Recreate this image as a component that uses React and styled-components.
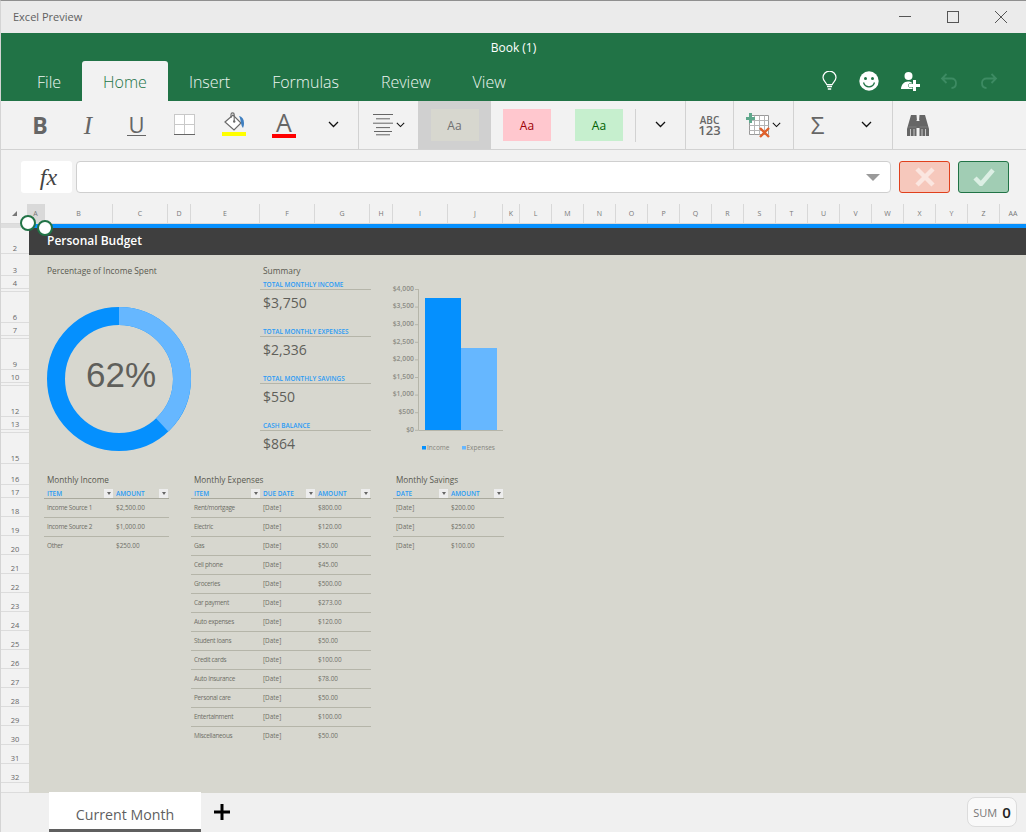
import styled, { createGlobalStyle } from 'styled-components';
import { Fragment } from 'react';

const UI = "'Open Sans', 'Noto Sans', sans-serif";

const GlobalStyle = createGlobalStyle`
  html, body { margin: 0; padding: 0; background: #f2f2f2; }
  * { box-sizing: border-box; }
  body { font-family: ${UI}; }
`;

const COLUMNS = [
  ['A', 17], ['B', 68], ['C', 55], ['D', 23], ['E', 69], ['F', 55], ['G', 55], ['H', 23], ['I', 55], ['J', 55], ['K', 17],
  ['L', 32], ['M', 32], ['N', 32], ['O', 32], ['P', 32], ['Q', 32], ['R', 32], ['S', 32], ['T', 32], ['U', 32], ['V', 32],
  ['W', 32], ['X', 32], ['Y', 32], ['Z', 32], ['AA', 27],
];

const ROWS = [
  ['2', 26], ['3', 22], ['4', 13], ['', 3], ['6', 31], ['7', 13], ['', 3], ['9', 31], ['10', 13], ['', 3], ['12', 31],
  ['13', 13], ['', 3], ['15', 31], ['16', 21], ['17', 13],
  ...Array.from({ length: 15 }, (_, i) => [String(18 + i), 19]),
  ['', 10],
];

const SUMMARY = [
  ['TOTAL MONTHLY INCOME', '$3,750'],
  ['TOTAL MONTHLY EXPENSES', '$2,336'],
  ['TOTAL MONTHLY SAVINGS', '$550'],
  ['CASH BALANCE', '$864'],
];

const INCOME = [
  ['Income Source 1', '$2,500.00'],
  ['Income Source 2', '$1,000.00'],
  ['Other', '$250.00'],
];

const EXPENSES = [
  ['Rent/mortgage', '[Date]', '$800.00'],
  ['Electric', '[Date]', '$120.00'],
  ['Gas', '[Date]', '$50.00'],
  ['Cell phone', '[Date]', '$45.00'],
  ['Groceries', '[Date]', '$500.00'],
  ['Car payment', '[Date]', '$273.00'],
  ['Auto expenses', '[Date]', '$120.00'],
  ['Student loans', '[Date]', '$50.00'],
  ['Credit cards', '[Date]', '$100.00'],
  ['Auto Insurance', '[Date]', '$78.00'],
  ['Personal care', '[Date]', '$50.00'],
  ['Entertainment', '[Date]', '$100.00'],
  ['Miscellaneous', '[Date]', '$50.00'],
];

const SAVINGS = [
  ['[Date]', '$200.00'],
  ['[Date]', '$250.00'],
  ['[Date]', '$100.00'],
];

const AXIS = ['$4,000', '$3,500', '$3,000', '$2,500', '$2,000', '$1,500', '$1,000', '$500', '$0'];

const Window = styled.div`
  position: relative;
  width: 1026px;
  height: 832px;
  overflow: hidden;
  display: flex;
  flex-direction: column;
  border-top: 1px solid #8f8f8f;
  border-left: 1px solid #d4d4d4;
  background: #f2f2f2;
`;

const TitleBar = styled.div`
  height: 32px;
  flex: none;
  background: #ebebeb;
  display: flex;
  align-items: center;
  padding: 0 1px 0 12px;
`;

const AppName = styled.span`
  font-size: 11px;
  color: #606060;
  flex: 1;
  padding-bottom: 1px;
`;

const WinButton = styled.button`
  width: 48px;
  height: 32px;
  border: 0;
  padding: 0;
  background: none;
  display: flex;
  align-items: center;
  justify-content: center;
`;

const Header = styled.div`
  height: 68px;
  flex: none;
  background: #217346;
  display: flex;
  flex-direction: column;
`;

const BookName = styled.div`
  height: 28px;
  display: flex;
  align-items: center;
  justify-content: center;
  font-size: 12px;
  color: #fff;
  padding-top: 1px;
`;

const TabRow = styled.div`
  flex: 1;
  display: flex;
  padding-left: 15px;
`;

const Tab = styled.div`
  padding: 2px 21px 0;
  display: flex;
  align-items: center;
  font-size: 16px;
  font-weight: 300;
  border-radius: 3px 3px 0 0;
  color: ${({ $active }) => ($active ? '#217346' : '#eef6f1')};
  background: ${({ $active }) => ($active ? '#f2f2f2' : 'transparent')};
`;

const HeaderTools = styled.div`
  margin-left: auto;
  display: flex;
  align-items: center;
  padding-right: 28px;
  gap: 22px;
`;

const HistoryTools = styled.div`
  display: flex;
  gap: 22px;
  margin-left: -2px;
`;

const Ribbon = styled.div`
  height: 49px;
  flex: none;
  display: flex;
  border-bottom: 1px solid #d2d2d2;
`;

const RibbonGroup = styled.div`
  display: flex;
  height: 100%;
  padding-left: ${({ $pad }) => $pad || 0}px;
  border-right: ${({ $plain }) => ($plain ? '0' : '1px solid #d2d2d2')};
`;

const ToolButton = styled.div`
  width: ${({ $w }) => $w}px;
  height: 100%;
  display: flex;
  flex-direction: column;
  align-items: center;
  justify-content: center;
  color: #666;
  padding-bottom: ${({ $lift }) => $lift || 0}px;
`;

const BoldMark = styled.span`
  font-size: 23px;
  font-weight: 700;
  line-height: 1;
`;

const ItalicMark = styled.span`
  font-family: 'Liberation Serif', serif;
  font-style: italic;
  font-size: 25px;
  line-height: 1;
`;

const UnderMark = styled.span`
  font-size: 22px;
  line-height: 21px;
  padding: 0 1px;
  border-bottom: 1px solid #666;
`;

const ColorMark = styled.span`
  font-size: 25px;
  line-height: 22px;
  height: 23px;
`;

const ColorBar = styled.span`
  width: 24px;
  height: 4px;
  background: ${({ $color }) => $color};
`;

const InlineTools = styled.div`
  width: ${({ $w }) => $w}px;
  height: 100%;
  display: flex;
  align-items: center;
  padding-left: ${({ $pad }) => $pad}px;
  gap: ${({ $gap }) => $gap}px;
`;

const StyleCell = styled.div`
  width: ${({ $w }) => $w}px;
  height: 100%;
  display: flex;
  align-items: center;
  justify-content: center;
  background: ${({ $selected }) => ($selected ? '#d0d0d0' : 'transparent')};
`;

const Swatch = styled.div`
  width: 48px;
  height: 32px;
  display: flex;
  align-items: center;
  justify-content: center;
  font-size: 12px;
  background: ${({ $bg }) => $bg};
  color: ${({ $fg }) => $fg};
`;

const InnerDivider = styled.div`
  width: 1px;
  height: 33px;
  margin-top: 8px;
  background: #d2d2d2;
`;

const NumberMark = styled.div`
  font-size: 10px;
  font-weight: 600;
  line-height: 10px;
  text-align: center;
  color: #666;
  & > b { display: block; font-size: 13px; line-height: 11px; font-weight: 600; }
`;

const SigmaMark = styled.span`
  font-size: 24px;
  color: #666;
  line-height: 1;
`;

const FormulaBar = styled.div`
  height: 54px;
  flex: none;
  display: flex;
  align-items: center;
  padding: 0 16px 0 20px;
`;

const FxBox = styled.div`
  width: 51px;
  height: 32px;
  background: #fff;
  border-radius: 3px;
  display: flex;
  align-items: center;
  justify-content: center;
  padding-left: 4px;
  font-family: 'Liberation Serif', serif;
  font-style: italic;
  font-size: 24px;
  color: #444;
`;

const FormulaInput = styled.div`
  width: 815px;
  height: 32px;
  margin-left: 4px;
  background: #fff;
  border: 1px solid #cfcfcf;
  border-radius: 4px;
  display: flex;
  align-items: center;
  justify-content: flex-end;
  padding-right: 10px;
`;

const Caret = styled.span`
  width: 0;
  height: 0;
  border-left: 7px solid transparent;
  border-right: 7px solid transparent;
  border-top: 7px solid #9a9a9a;
`;

const FormulaButton = styled.div`
  width: 51px;
  height: 32px;
  border-radius: 3px;
  display: flex;
  align-items: center;
  justify-content: center;
  margin-left: ${({ $ml }) => $ml}px;
  background: ${({ $bg }) => $bg};
  border: 1px solid ${({ $line }) => $line};
`;

const ColumnBar = styled.div`
  height: 19px;
  flex: none;
  display: flex;
`;

const Corner = styled.div`
  width: 27px;
  display: flex;
  justify-content: flex-end;
  padding: 7px 10px 0 0;
`;

const CornerMark = styled.span`
  width: 0;
  height: 0;
  border-left: 5px solid transparent;
  border-bottom: 5px solid #777;
`;

const ColumnHead = styled.div`
  width: ${({ $w }) => $w}px;
  flex: none;
  display: flex;
  align-items: center;
  justify-content: center;
  font-size: 7px;
  color: #777;
  border-left: ${({ $selected }) => ($selected ? '0' : '1px solid #d8d8d8')};
  background: ${({ $selected }) => ($selected ? '#d9d9d9' : 'transparent')};
`;

const GridArea = styled.div`
  flex: 1;
  min-height: 0;
  display: flex;
  border-top: 1px solid #dadada;
`;

const RowBar = styled.div`
  width: 28px;
  flex: none;
  overflow: hidden;
  display: flex;
  flex-direction: column;
`;

const TopRowHead = styled.div`
  height: 4px;
  flex: none;
  background: #dedede;
`;

const RowHead = styled.div`
  height: ${({ $h }) => $h}px;
  flex: none;
  display: flex;
  align-items: flex-end;
  justify-content: center;
  font-size: 7.5px;
  line-height: 9px;
  color: #666;
  border-bottom: 1px solid #dcdcdc;
`;

const Sheet = styled.div`
  flex: 1;
  min-width: 0;
  background: #d7d7cf;
  border-top: 4px solid #0590fe;
  display: flex;
  flex-direction: column;
`;

const Banner = styled.div`
  height: 27px;
  flex: none;
  background: #3f3f3f;
  color: #fff;
  font-size: 12px;
  font-weight: 600;
  display: flex;
  align-items: center;
  padding: 0 0 3px 18px;
`;

const TopSection = styled.div`
  height: 210px;
  flex: none;
  display: flex;
`;

const DonutPanel = styled.div`
  width: 231px;
  flex: none;
  padding-left: 18px;
`;

const BlockTitle = styled.div`
  height: 21px;
  padding-top: 9px;
  font-size: 8.4px;
  line-height: 14px;
  color: #59594f;
  padding-left: ${({ $pad }) => $pad || 0}px;
`;

const DonutChart = styled.svg`
  display: block;
  margin-top: 31px;
`;

const SummaryPanel = styled.div`
  width: 111px;
  flex: none;
`;

const SummaryLabel = styled.div`
  height: 14px;
  padding-left: 3px;
  font-size: 6.4px;
  font-weight: 600;
  line-height: 17px;
  color: #2a9bf5;
  border-bottom: 1px solid #b5b5a9;
  white-space: nowrap;
`;

const SummaryValue = styled.div`
  height: 33px;
  padding-left: 3px;
  font-size: 14px;
  line-height: 25px;
  color: #5f5f5a;
`;

const BarChart = styled.svg`
  display: block;
  flex: none;
`;

const TableSection = styled.div`
  display: flex;
  gap: 22px;
  padding-left: 15px;
`;

const DataTable = styled.div`
  width: ${({ $w }) => $w}px;
  flex: none;
`;

const TableTitle = styled.div`
  height: 21px;
  display: flex;
  align-items: flex-end;
  padding-left: 3px;
  font-size: 8.2px;
  line-height: 12px;
  color: #59594f;
`;

const HeadRow = styled.div`
  height: 13px;
  display: grid;
  grid-template-columns: ${({ $cols }) => $cols};
  border-bottom: 1px solid #a9a99d;
`;

const HeadCell = styled.div`
  display: flex;
  align-items: center;
  justify-content: space-between;
  padding: 3px 0 0 3px;
  font-size: 6.4px;
  font-weight: 600;
  color: #2a9bf5;
  white-space: nowrap;
`;

const FilterButton = styled.span`
  width: 9px;
  height: 9px;
  margin-top: -1px;
  background: #ededed;
  display: flex;
  align-items: center;
  justify-content: center;
  &::after {
    content: '';
    border-left: 2.5px solid transparent;
    border-right: 2.5px solid transparent;
    border-top: 3px solid #666;
  }
`;

const DataRow = styled.div`
  height: 19px;
  display: grid;
  grid-template-columns: ${({ $cols }) => $cols};
  align-items: center;
  padding-bottom: 1px;
  border-bottom: 1px solid ${({ $last }) => ($last ? 'transparent' : '#b5b5a9')};
`;

const DataCell = styled.div`
  padding-left: 3px;
  font-size: 6.4px;
  color: #6e6e66;
  white-space: nowrap;
  letter-spacing: ${({ $tight }) => ($tight ? '-0.3px' : '0')};
`;

const TabBar = styled.div`
  height: 39px;
  flex: none;
  background: #f0f0f0;
  display: flex;
  align-items: flex-start;
  padding-left: 48px;
`;

const SheetTab = styled.div`
  width: 152px;
  height: 41px;
  margin-top: -1px;
  background: #fff;
  border-bottom: 4px solid #5f5f5f;
  display: flex;
  align-items: center;
  justify-content: center;
  font-size: 14.2px;
  font-weight: 500;
  color: #5f5f5f;
  padding-top: 7px;
`;

const AddTab = styled.div`
  width: 42px;
  height: 39px;
  display: flex;
  align-items: center;
  justify-content: center;
  padding-bottom: 2px;
`;

const SumBox = styled.div`
  width: 50px;
  height: 30px;
  margin: 4px 9px 0 auto;
  background: #f9f9f9;
  border: 1px solid #dcdcdc;
  border-radius: 8px;
  display: flex;
  align-items: center;
  justify-content: center;
  gap: 5px;
  font-size: 11px;
  color: #777;
  & > b { font-size: 15px; font-weight: 600; color: #222; }
`;

const Handle = styled.span`
  position: absolute;
  left: ${({ $x }) => $x}px;
  top: ${({ $y }) => $y}px;
  width: 16px;
  height: 16px;
  background: #fff;
  border: 2px solid #217346;
  border-radius: 50%;
`;

const Chevron = ({ size = 11 }) => (
  <svg width={size} height={size * 0.64} viewBox="0 0 11 7">
    <path d="M1 1l4.5 4.5L10 1" fill="none" stroke="#111" strokeWidth="1.3" />
  </svg>
);

const BordersIcon = () => (
  <svg width="22" height="22" viewBox="0 0 22 22">
    <rect x="0.5" y="0.5" width="20" height="20" fill="#fff" stroke="#c9c9c9" />
    <path d="M10.5 1v19M1 10.5h19" stroke="#c9c9c9" />
    <path d="M0 20.5h21" stroke="#666" />
  </svg>
);

const FillIcon = () => (
  <svg width="24" height="20" viewBox="0 0 24 20">
    <path d="M3 10l8-7 8 8-7 7z" fill="#fff" stroke="#6a6a6a" strokeWidth="1.2" />
    <path d="M9 6V2.5a1.6 1.6 0 0 1 3.2 0V9" fill="none" stroke="#6a6a6a" strokeWidth="1.1" />
    <circle cx="12.2" cy="9.5" r="1.2" fill="#6a6a6a" />
    <path d="M17 4c3 .6 5 3 5 7 0 2-.3 3.5-1 5-1-1-1.6-3-2-5-.3-2.4-1-5-2-7z" fill="#3f7fc0" />
  </svg>
);

const AlignIcon = () => (
  <svg width="20" height="22" viewBox="0 0 20 22">
    <path d="M0 .5h20M3 4.8h14M0 9.2h20M3 13.6h14M1 17.5h18M3 20.8h14" stroke="#666" strokeWidth="1" />
  </svg>
);

const TableIcon = () => (
  <svg width="25" height="25" viewBox="0 0 25 25">
    <path d="M3.5 2.5h19v19h-19z" fill="#fff" stroke="#9a9a9a" />
    <path d="M3.5 7.5h19M3.5 12.5h19M3.5 17.5h19M8.5 2.5v19M13.5 2.5v19M18.5 2.5v19" stroke="#b5b5b5" />
    <path d="M0 4h9v3H6v3H3V7H0z M3 0h3v4H3z" fill="#5fa88c" />
    <path d="M14 15l9 9M23 15l-9 9" stroke="#e0602a" strokeWidth="2.4" />
  </svg>
);

const BinocularsIcon = () => (
  <svg width="22" height="21" viewBox="0 0 22 21">
    <path d="M4 0h5.500l.5 6h2l.5-6H18l2 7 2 7v7h-9.500v-8h-3v8H0v-7l2-7z" fill="#666" />
    <path d="M3.500 14v7M7 14v7M15 14v7M18.500 14v7" stroke="#f2f2f2" strokeWidth="0.7" />
    <path d="M9.500 5.500h3" stroke="#f2f2f2" strokeWidth="0.8" />
    <path d="M1.500 12h8M12.500 12h8" stroke="#8a8a8a" strokeWidth="0.7" />
  </svg>
);

const BulbIcon = () => (
  <svg width="15" height="20" viewBox="0 0 15 20">
    <path d="M4.8 13.6C4 11 1 9.800 1 6.600a6.500 6.500 0 0 1 13 0c0 3.200-3 4.400-3.800 7z" fill="none" stroke="#fff" strokeWidth="1.200" />
    <path d="M5 15.500h5M5.800 18h3.400" stroke="#fff" strokeWidth="1.600" />
  </svg>
);

const SmileIcon = () => (
  <svg width="20" height="20" viewBox="0 0 20 20">
    <circle cx="10" cy="10" r="9.700" fill="#fff" />
    <circle cx="6.500" cy="7.500" r="1.500" fill="#217346" />
    <circle cx="13.500" cy="7.500" r="1.500" fill="#217346" />
    <path d="M4.500 11.500c1 3 3 4.300 5.500 4.300s4.500-1.300 5.500-4.300" fill="none" stroke="#217346" strokeWidth="1.300" />
  </svg>
);

const AddUserIcon = () => (
  <svg width="19" height="19" viewBox="0 0 19 19">
    <circle cx="7.500" cy="4" r="4" fill="#fff" />
    <path d="M0 17c0-4 3-7.500 7-7.500s6 2.500 6 7.500z" fill="#fff" />
    <path d="M12 8h3v4h4v3h-4v4h-3v-4H8v-3h4z" fill="#fff" stroke="#217346" strokeWidth="1" paintOrder="stroke" />
  </svg>
);

const ArrowIcon = ({ flip }) => (
  <svg width="18" height="16" viewBox="0 0 17 16" style={flip ? { transform: 'scaleX(-1)' } : undefined}>
    <path d="M6 1L1.500 5.500 6 10M2 5.500h9c2.500 0 4.500 1.800 4.500 4.500S14 15 11 15" fill="none" stroke="#3d8b63" strokeWidth="1.800" />
  </svg>
);

const WindowIcon = ({ children }) => (
  <svg width="14" height="14" viewBox="0 0 14 14" fill="none" stroke="#555" strokeWidth="1">{children}</svg>
);

const Donut = () => (
  <DonutChart width="144" height="144" viewBox="0 0 144 144">
    <circle cx="72" cy="72" r="63" fill="none" stroke="#0590fe" strokeWidth="18" />
    <circle
      cx="72" cy="72" r="63" fill="none" stroke="#66b7ff" strokeWidth="18"
      pathLength="100" strokeDasharray="38 62" transform="rotate(-90 72 72)"
    />
    <text x="74" y="80" textAnchor="middle" fontFamily="'Liberation Sans', sans-serif" fontSize="35" fill="#5f5f5b">62%</text>
  </DonutChart>
);

const Bars = () => (
  <BarChart width="140" height="210" viewBox="371 255 140 210">
    {AXIS.map((label, i) => (
      <Fragment key={label}>
        <text x="414" y={290.8 + i * 17.6} textAnchor="end" fontFamily={UI} fontSize="6.800" fontWeight="600" fill="#8d8d86">{label}</text>
        <path d={`M415 ${289.5 + i * 17.6}h3`} stroke="#b5b5a9" />
      </Fragment>
    ))}
    <path d="M418.500 289v141.500H503" fill="none" stroke="#b5b5a9" />
    <rect x="425" y="298" width="36" height="132" fill="#0590fe" />
    <rect x="461" y="348" width="36" height="82" fill="#66b7ff" />
    <rect x="422" y="446" width="4" height="3.500" fill="#0590fe" />
    <text x="427" y="449.800" fontFamily={UI} fontSize="6.500" fill="#85857e">Income</text>
    <rect x="462" y="446" width="4" height="3.500" fill="#66b7ff" />
    <text x="466.500" y="449.800" fontFamily={UI} fontSize="6.500" fill="#85857e">Expenses</text>
  </BarChart>
);

const BudgetTable = ({ title, width, cols, head, rows, tight }) => (
  <DataTable $w={width}>
    <TableTitle>{title}</TableTitle>
    <HeadRow $cols={cols}>
      {head.map((label) => (
        <HeadCell key={label}>
          {label}
          <FilterButton />
        </HeadCell>
      ))}
    </HeadRow>
    {rows.map((row, i) => (
      <DataRow key={row[0] + i} $cols={cols} $last={i === rows.length - 1}>
        {row.map((cell, j) => (
          <DataCell key={j} $tight={tight && j === 0}>{cell}</DataCell>
        ))}
      </DataRow>
    ))}
  </DataTable>
);

export default function App() {
  return (
    <Window>
      <GlobalStyle />
      <TitleBar>
        <AppName>Excel Preview</AppName>
        <WinButton>
          <WindowIcon><path d="M1 6.500h12" /></WindowIcon>
        </WinButton>
        <WinButton>
          <WindowIcon><rect x="1.500" y="1.500" width="11" height="11" /></WindowIcon>
        </WinButton>
        <WinButton>
          <WindowIcon><path d="M1 1l12 12M13 1L1 13" /></WindowIcon>
        </WinButton>
      </TitleBar>

      <Header>
        <BookName>Book (1)</BookName>
        <TabRow>
          <Tab>File</Tab>
          <Tab $active>Home</Tab>
          <Tab>Insert</Tab>
          <Tab>Formulas</Tab>
          <Tab>Review</Tab>
          <Tab>View</Tab>
          <HeaderTools>
            <BulbIcon />
            <SmileIcon />
            <AddUserIcon />
            <HistoryTools>
              <ArrowIcon />
              <ArrowIcon flip />
            </HistoryTools>
          </HeaderTools>
        </TabRow>
      </Header>

      <Ribbon>
        <RibbonGroup $pad={15}>
          <ToolButton $w={48}><BoldMark>B</BoldMark></ToolButton>
          <ToolButton $w={48}><ItalicMark>I</ItalicMark></ToolButton>
          <ToolButton $w={49}><UnderMark>U</UnderMark></ToolButton>
          <ToolButton $w={47}><BordersIcon /></ToolButton>
          <ToolButton $w={51} $lift={2}><FillIcon /><ColorBar $color="#ffff00" /></ToolButton>
          <ToolButton $w={50} $lift={2}><ColorMark>A</ColorMark><ColorBar $color="#ff0000" /></ToolButton>
          <ToolButton $w={49}><Chevron /></ToolButton>
        </RibbonGroup>
        <RibbonGroup $plain>
          <InlineTools $w={59} $pad={14} $gap={3}><AlignIcon /><Chevron size={9} /></InlineTools>
          <StyleCell $w={73} $selected><Swatch $bg="#d7d7cf" $fg="#6f6f6f">Aa</Swatch></StyleCell>
          <StyleCell $w={72}><Swatch $bg="#ffc7ce" $fg="#9c0006">Aa</Swatch></StyleCell>
          <StyleCell $w={72}><Swatch $bg="#c6efce" $fg="#006100">Aa</Swatch></StyleCell>
          <InnerDivider />
        </RibbonGroup>
        <RibbonGroup>
          <ToolButton $w={49}><Chevron /></ToolButton>
        </RibbonGroup>
        <RibbonGroup>
          <ToolButton $w={47}><NumberMark>ABC<b>123</b></NumberMark></ToolButton>
        </RibbonGroup>
        <RibbonGroup>
          <InlineTools $w={59} $pad={12} $gap={1}><TableIcon /><Chevron size={9} /></InlineTools>
        </RibbonGroup>
        <RibbonGroup>
          <ToolButton $w={47}><SigmaMark>Σ</SigmaMark></ToolButton>
          <ToolButton $w={51}><Chevron /></ToolButton>
        </RibbonGroup>
        <RibbonGroup $plain>
          <ToolButton $w={49}><BinocularsIcon /></ToolButton>
        </RibbonGroup>
      </Ribbon>

      <FormulaBar>
        <FxBox>fx</FxBox>
        <FormulaInput><Caret /></FormulaInput>
        <FormulaButton $ml={8} $bg="#f6c8bc" $line="#e0401c">
          <svg width="20" height="20" viewBox="0 0 20 20"><path d="M2 2l16 16M18 2L2 18" stroke="#fbe6e0" strokeWidth="4.500" /></svg>
        </FormulaButton>
        <FormulaButton $ml={8} $bg="#a1cdb4" $line="#217346">
          <svg width="22" height="18" viewBox="0 0 22 18"><path d="M2 10l6 6L20 2" fill="none" stroke="#dcefe4" strokeWidth="4.500" /></svg>
        </FormulaButton>
      </FormulaBar>

      <ColumnBar>
        <Corner><CornerMark /></Corner>
        {COLUMNS.map(([name, width]) => (
          <ColumnHead key={name} $w={width} $selected={name === 'A'}>{name}</ColumnHead>
        ))}
      </ColumnBar>

      <GridArea>
        <RowBar>
          <TopRowHead />
          {ROWS.map(([label, height], i) => (
            <RowHead key={i} $h={height}>{label}</RowHead>
          ))}
        </RowBar>
        <Sheet>
          <Banner>Personal Budget</Banner>
          <TopSection>
            <DonutPanel>
              <BlockTitle>Percentage of Income Spent</BlockTitle>
              <Donut />
            </DonutPanel>
            <SummaryPanel>
              <BlockTitle $pad={3}>Summary</BlockTitle>
              {SUMMARY.map(([label, value]) => (
                <Fragment key={label}>
                  <SummaryLabel>{label}</SummaryLabel>
                  <SummaryValue>{value}</SummaryValue>
                </Fragment>
              ))}
            </SummaryPanel>
            <Bars />
          </TopSection>
          <TableSection>
            <BudgetTable title="Monthly Income" width={125} cols="69px 55px" head={['ITEM', 'AMOUNT']} rows={INCOME} tight />
            <BudgetTable title="Monthly Expenses" width={180} cols="69px 55px 55px" head={['ITEM', 'DUE DATE', 'AMOUNT']} rows={EXPENSES} tight />
            <BudgetTable title="Monthly Savings" width={111} cols="55px 55px" head={['DATE', 'AMOUNT']} rows={SAVINGS} />
          </TableSection>
        </Sheet>
      </GridArea>

      <TabBar>
        <SheetTab>Current Month</SheetTab>
        <AddTab>
          <svg width="16" height="16" viewBox="0 0 16 16"><path d="M8 0v16M0 8h16" stroke="#000" strokeWidth="3" /></svg>
        </AddTab>
        <SumBox>SUM <b>0</b></SumBox>
      </TabBar>

      <Handle $x={19} $y={214} />
      <Handle $x={36} $y={219} />
    </Window>
  );
}
